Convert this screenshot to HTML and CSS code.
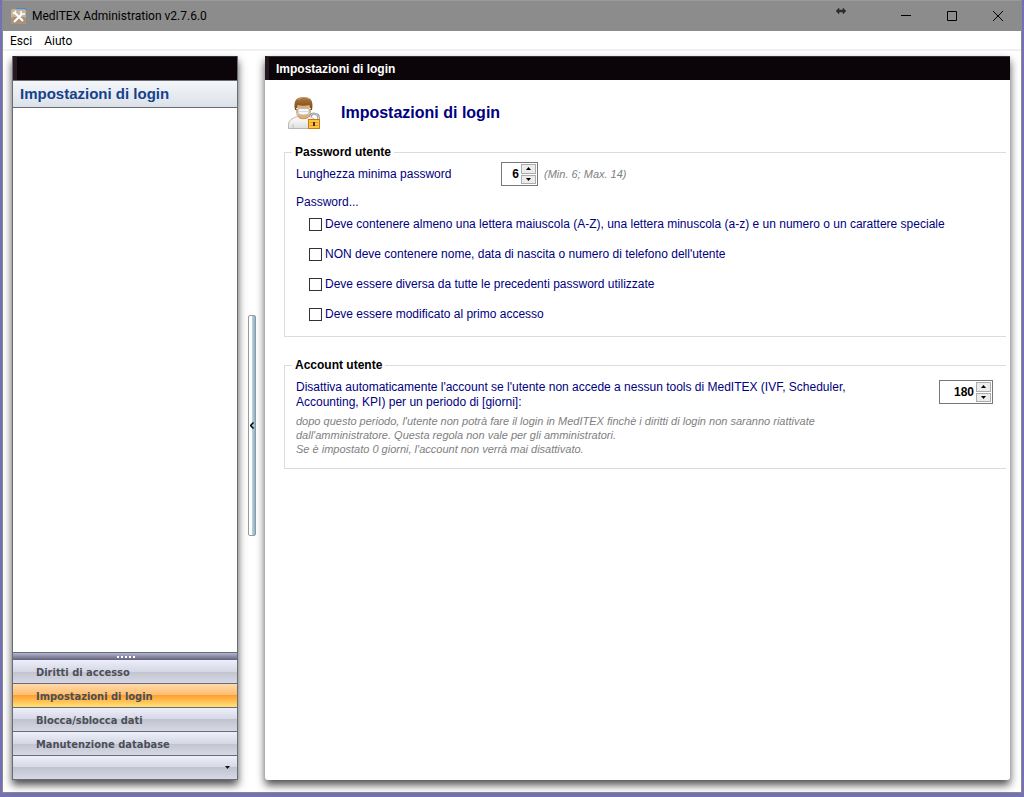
FILE: index.html
```html
<!DOCTYPE html>
<html lang="it">

<head>
  <meta charset="UTF-8">
  <meta name="viewport" content="width=device-width, initial-scale=1.0">
  <title>MedITEX Administration</title>
  <link rel="stylesheet" href="styles.css">
</head>

<body>
  <div class="window">
    <header class="titlebar">
      <svg class="app-icon" width="16" height="16" viewBox="0 0 16 16">
        <rect x="0" y="1" width="15" height="15" rx="2" fill="#c4b299"/>
        <rect x="0" y="9" width="15" height="7" rx="2" fill="#a89378"/>
        <path d="M5 0.500h10" stroke="#3c8fd6" stroke-width="1.500"/>
        <path d="M4 5l8 8M11 6l-8 8" stroke="#fff" stroke-width="2"/>
        <path d="M2 6l3-3M10 3v3h4" stroke="#fff" stroke-width="1.600" fill="none"/>
      </svg>
      <span class="title">MedITEX Administration v2.7.6.0</span>
      <svg class="resize-icon" width="10" height="6" viewBox="0 0 10 6">
        <path d="M0 3l3-3v2h4V0l3 3-3 3V4H3v2z" fill="#2d2d2d" stroke="#2d2d2d" stroke-width=".5"/>
      </svg>
      <button class="win-btn" type="button" aria-label="Riduci a icona">
        <svg width="10" height="10" viewBox="0 0 10 10"><path d="M0 4.500h10" stroke="#000"/></svg>
      </button>
      <button class="win-btn" type="button" aria-label="Ingrandisci">
        <svg width="10" height="10" viewBox="0 0 10 10"><path d="M.5 .5h9v9h-9z" stroke="#000" fill="none"/></svg>
      </button>
      <button class="win-btn" type="button" aria-label="Chiudi">
        <svg width="10" height="10" viewBox="0 0 10 10"><path d="M0 0l10 10M10 0L0 10" stroke="#000"/></svg>
      </button>
    </header>

    <nav class="menu">
      <a href="#">Esci</a>
      <a href="#">Aiuto</a>
    </nav>

    <div class="content">
      <aside class="sidebar">
        <div class="bar"></div>
        <h2 class="side-title">Impostazioni di login</h2>
        <div class="side-space"></div>
        <div class="grip"><i></i><i></i><i></i><i></i><i></i></div>
        <button class="side-btn" type="button">Diritti di accesso</button>
        <button class="side-btn active" type="button">Impostazioni di login</button>
        <button class="side-btn" type="button">Blocca/sblocca dati</button>
        <button class="side-btn" type="button">Manutenzione database</button>
        <button class="side-btn more" type="button" aria-label="Altro">
          <svg width="5" height="3" viewBox="0 0 5 3"><path d="M0 0h5L2.500 3z" fill="#111"/></svg>
        </button>
      </aside>

      <div class="splitter">
        <button class="split-btn" type="button" aria-label="Nascondi pannello">
          <svg width="4" height="7" viewBox="0 0 4 7"><path d="M3.500 .5l-3 3 3 3" stroke="#000" stroke-width="1.500" fill="none"/></svg>
        </button>
      </div>

      <main class="panel">
        <div class="bar">Impostazioni di login</div>
        <div class="page">
          <div class="heading">
            <svg width="34" height="34" viewBox="0 0 34 34">
              <defs>
                <linearGradient id="hair" x1="0" y1="0" x2="0" y2="1">
                  <stop offset="0" stop-color="#b07c40"/>
                  <stop offset="1" stop-color="#6f4218"/>
                </linearGradient>
                <linearGradient id="coat" x1="0" y1="0" x2="0" y2="1">
                  <stop offset="0" stop-color="#fff"/>
                  <stop offset="1" stop-color="#dedede"/>
                </linearGradient>
              </defs>
              <path d="M.5 32.500v-4c0-4 3-6 9-8h12c5 2 7 4 7 8v4z" fill="url(#coat)" stroke="#b5b5b5"/>
              <path d="M5 32v-4M25 32v-4" stroke="#c4c4c4"/>
              <path d="M10 17h11v4c-2 3-9 3-11 0z" fill="#c58c42"/>
              <path d="M8 8h15v8c0 4-3 6-7.500 6.500C11 22 8 20 8 16z" fill="#e3b071"/>
              <path d="M7 14C5 4 9 1 15.500 1S26 4 24 14h-1.500l-1-5c-4 1-8 1-12 0l-1 5z" fill="url(#hair)"/>
              <path d="M10 4c3-3 8-3 11-1" stroke="#cda26a" fill="none"/>
              <path d="M8 12.500h15M8.500 18l2-1M22.500 18l-2-1" stroke="#dfe3e6"/>
              <path d="M10 12.500h11v5c-1 1-3 1.500-5.500 1.500S11 18.500 10 17.500z" fill="#f6f8f9" stroke="#aab2b8" stroke-width=".8"/>
              <path d="M11 15.500h9" stroke="#d5dbe0"/>
              <path d="M22.500 21v-1c0-3 8-3 8 1v3" fill="none" stroke="#8f9498" stroke-width="2.500"/>
              <path d="M22.500 21v-1c0-3 8-3 8 1v3" fill="none" stroke="#d7dadc"/>
              <rect x="20.500" y="23.500" width="11" height="9" fill="#fcc444" stroke="#c97c0d"/>
              <path d="M22 26.500h8M22 29.500h8" stroke="#e99a20"/>
              <path d="M25 26h2v4h-2z" fill="#4b3208"/>
            </svg>
            <h1>Impostazioni di login</h1>
          </div>

          <fieldset class="group">
            <legend>Password utente</legend>
            <div class="row">
              <label class="len-label" for="len">Lunghezza minima password</label>
              <span class="spin">
                <input type="text" id="len" value="6">
                <span class="arrows">
                  <button type="button" aria-label="Aumenta"><svg width="5" height="3" viewBox="0 0 5 3"><path d="M0 3h5L2.500 0z"/></svg></button>
                  <button type="button" aria-label="Diminuisci"><svg width="5" height="3" viewBox="0 0 5 3"><path d="M0 0h5L2.500 3z"/></svg></button>
                </span>
              </span>
              <span class="hint">(Min. 6; Max. 14)</span>
            </div>
            <p class="sub">Password...</p>
            <div class="checks">
              <label><input type="checkbox">Deve contenere almeno una lettera maiuscola (A-Z), una lettera minuscola (a-z) e un numero o un carattere speciale</label>
              <label><input type="checkbox">NON deve contenere nome, data di nascita o numero di telefono dell'utente</label>
              <label><input type="checkbox">Deve essere diversa da tutte le precedenti password utilizzate</label>
              <label><input type="checkbox">Deve essere modificato al primo accesso</label>
            </div>
          </fieldset>

          <fieldset class="group account">
            <legend>Account utente</legend>
            <div class="row spread">
              <label class="days-label" for="days">Disattiva automaticamente l'account se l'utente non accede a nessun tools di MedITEX (IVF, Scheduler, Accounting, KPI) per un periodo di [giorni]:</label>
              <span class="spin wide">
                <input type="text" id="days" value="180">
                <span class="arrows">
                  <button type="button" aria-label="Aumenta"><svg width="5" height="3" viewBox="0 0 5 3"><path d="M0 3h5L2.500 0z"/></svg></button>
                  <button type="button" aria-label="Diminuisci"><svg width="5" height="3" viewBox="0 0 5 3"><path d="M0 0h5L2.500 3z"/></svg></button>
                </span>
              </span>
            </div>
            <p class="hint note">dopo questo periodo, l'utente non potrà fare il login in MedITEX finchè i diritti di login non saranno riattivate<br>
              dall'amministratore. Questa regola non vale per gli amministratori.<br>
              Se è impostato 0 giorni, l'account non verrà mai disattivato.</p>
          </fieldset>
        </div>
      </main>
    </div>
  </div>
</body>

</html>
```
FILE: styles.css
```css
* {
  box-sizing: border-box;
}

body {
  margin: 0;
  height: 100vh;
  padding: 0 2px 4px;
  background: #7472b4;
  font: 12px/15px "Liberation Sans", Arial, sans-serif;
  color: #000080;
}

button {
  margin: 0;
  padding: 0;
  font: inherit;
}

h1, h2, p {
  margin: 0;
}

svg {
  display: block;
}

.window {
  display: flex;
  flex-direction: column;
  height: 100%;
  background: #fff;
  border: 1px solid #8a8a8a;
  border-top: 0;
}

/* barra del titolo */
.titlebar {
  display: flex;
  align-items: center;
  height: 31px;
  padding-left: 8px;
  background: #8c8c8c;
  border-top: 1px solid #999;
  color: #000;
  font-family: Roboto, sans-serif;
}

.title {
  flex: 1;
  padding-left: 5px;
}

.resize-icon {
  align-self: flex-start;
  margin: 7px 37px 0 0;
}

.win-btn {
  display: flex;
  align-items: center;
  justify-content: center;
  width: 46px;
  height: 28px;
  border: 0;
  background: none;
}

.menu {
  display: flex;
  gap: 12px;
  height: 20px;
  padding: 3px 7px 0;
  border-bottom: 2px solid #f0f0f0;
  font-family: Roboto, sans-serif;
}

.menu a {
  color: #000;
  text-decoration: none;
}

.content {
  flex: 1;
  display: flex;
  min-height: 0;
  padding: 5px 11px 12px 9px;
}

.bar {
  flex: none;
  height: 24px;
  padding-left: 7px;
  background: #0b0509;
  border-left: 4px solid #271722;
  border-top: 1px solid #333;
  color: #fff;
  font-weight: bold;
  line-height: 24px;
}

/* pannello a sinistra */
.sidebar {
  display: flex;
  flex-direction: column;
  width: 226px;
  border: 1px solid #6a6c75;
  border-top: 0;
  box-shadow: 0 5px 8px rgba(0, 0, 0, 0.7);
}

.side-title {
  height: 28px;
  padding-left: 7px;
  background: linear-gradient(#f4f6f9, #dce1e9);
  border-top: 1px solid #6a6c75;
  border-bottom: 1px solid #6a6c75;
  color: #15428b;
  font-size: 15px;
  line-height: 26px;
}

.side-space {
  flex: 1;
}

.grip {
  display: flex;
  justify-content: center;
  gap: 2px;
  height: 8px;
  padding: 3px 0 0 2px;
  background: linear-gradient(#b5b5cd, #63607e);
  border-top: 1px solid #6a6c75;
}

.grip i {
  width: 2px;
  height: 2px;
  background: #fff;
}

.side-btn {
  height: 24px;
  padding: 1px 0 0 23px;
  border: 0;
  border-bottom: 1px solid #6a6c75;
  background: linear-gradient(#edf0fb, #d5d8e4 50%, #c1c3cf 50%, #d6d9e5);
  color: #4b4f58;
  font: bold 11px "DejaVu Sans Condensed", "DejaVu Sans", sans-serif;
  text-align: left;
}

.side-btn.active {
  background: linear-gradient(#ffd9ac, #ffbc6b 50%, #ff9f31 50%, #ffe278);
}

.side-btn.more {
  display: flex;
  justify-content: flex-end;
  align-items: center;
  height: 23px;
  padding: 0 7px 0 0;
  border-bottom: 0;
}

.splitter {
  display: flex;
  align-items: center;
  justify-content: center;
  width: 27px;
}

.split-btn {
  display: flex;
  align-items: center;
  justify-content: center;
  width: 8px;
  height: 221px;
  margin-top: 14px;
  border: 1px solid #999;
  border-radius: 2px;
  background: linear-gradient(to right, #fff 45%, #b9d7e8 50%, #8bb2cc);
}

/* pannello principale */
.panel {
  flex: 1;
  display: flex;
  flex-direction: column;
  min-width: 0;
  background: #fff;
  border-radius: 0 0 3px 3px;
  box-shadow: 0 5px 8px rgba(0, 0, 0, 0.7);
}

.page {
  padding: 16px 4px 0 19px;
}

.heading {
  display: flex;
  align-items: center;
  gap: 19px;
  height: 34px;
  margin-bottom: 14px;
  padding-left: 4px;
}

.heading h1 {
  font-size: 16px;
  line-height: 20px;
}

.group {
  min-width: 0;
  height: 193px;
  margin: 0;
  padding: 2px 13px 0 11px;
  border: 1px solid #dcdcdc;
  border-right: 0;
}

.group legend {
  margin-left: -4px;
  padding: 0 3px;
  color: #000;
  font-weight: bold;
  line-height: 16px;
}

.row {
  display: flex;
  align-items: center;
}

.len-label {
  width: 205px;
}

.spin {
  display: flex;
  width: 37px;
  height: 24px;
  padding: 1px;
  border: 1px solid #777;
}

.spin.wide {
  width: 54px;
}

.spin input {
  flex: 1;
  min-width: 0;
  padding: 0 2px 0 0;
  border: 0;
  font: bold 12px "Liberation Sans", Arial, sans-serif;
  text-align: right;
}

.arrows {
  display: flex;
  flex-direction: column;
  gap: 1px;
}

.arrows button {
  display: flex;
  align-items: center;
  justify-content: center;
  width: 15px;
  flex: 1;
  border: 1px solid #adadad;
  background: #ececec;
}

.hint {
  margin-left: 6px;
  color: #808080;
  font-size: 11px;
  font-style: italic;
}

.sub {
  margin-top: 9px;
}

.checks {
  display: flex;
  flex-direction: column;
  gap: 15px;
  margin-top: 7px;
  padding-left: 13px;
}

.checks label {
  display: flex;
  align-items: center;
  gap: 3px;
}

.checks input {
  appearance: none;
  flex: none;
  width: 13px;
  height: 13px;
  margin: 0;
  border: 1px solid #333;
  background: #fff;
}

.checks input:checked {
  background: #000080;
}

.account {
  height: 112px;
  margin-top: 20px;
  padding-top: 7px;
}

.days-label {
  max-width: 580px;
}

.spread {
  align-items: flex-start;
  justify-content: space-between;
}

.note {
  margin: 4px 0 0;
  line-height: 14px;
}
```
